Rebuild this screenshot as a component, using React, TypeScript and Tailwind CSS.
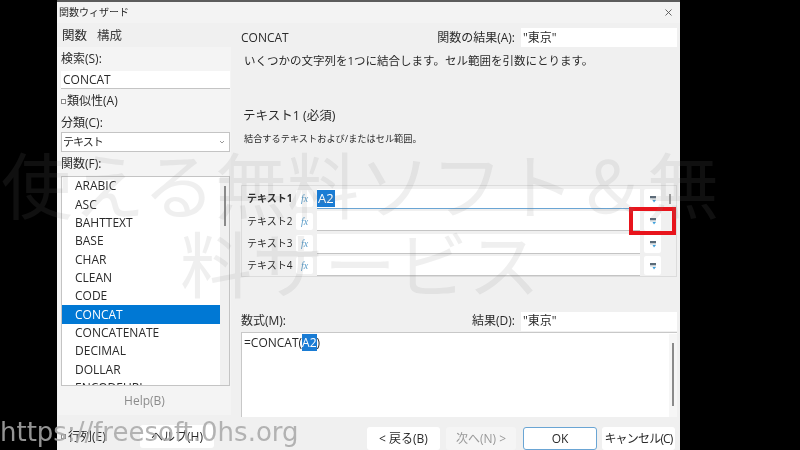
const functions = ['ARABIC', 'ASC', 'BAHTTEXT', 'BASE', 'CHAR', 'CLEAN', 'CODE', 'CONCAT', 'CONCATENATE', 'DECIMAL', 'DOLLAR', 'ENCODEURL']
const args = ['テキスト1', 'テキスト2', 'テキスト3', 'テキスト4']

function FxButton() {
  return (
    <div className="w-[17px] h-[17px] shrink-0 bg-white rounded-[2px] flex items-center justify-center">
      <span className="font-['Liberation_Serif',serif] italic text-[10px] text-[#5a9cc8]">fx</span>
    </div>
  )
}

function RefButton() {
  return (
    <div className="w-[17px] h-[19px] shrink-0 bg-white rounded-[2px] flex items-center justify-center">
      <svg width="8" height="8" viewBox="0 0 8 8">
        <rect x="1" y="1" width="6" height="2.5" fill="#5a6a78" />
        <rect x="1" y="3.5" width="6" height="1.5" fill="#dfe6ea" />
        <path d="M3.5 5h3.5L5 7.5z" fill="#3fa0dc" />
      </svg>
    </div>
  )
}

function Button({ children, className = '' }: { children: React.ReactNode; className?: string }) {
  return (
    <div className={`h-[23px] flex items-center justify-center rounded-[3px] text-[12px] whitespace-nowrap ${className}`}>
      {children}
    </div>
  )
}

export default function App() {
  return (
    <div className="relative w-[800px] h-[450px] overflow-hidden bg-black pl-[57px] font-['Open_Sans','Noto_Sans_CJK_JP',sans-serif] text-[12px] text-[#2a2a2a] blur-[0.4px]">
      {/* Dialog */}
      <div className="w-[623px] h-[450px] bg-[#f0f0f0] flex flex-col border-t-2 border-[#5c5c5c]">
        {/* Title bar */}
        <div className="h-[21px] shrink-0 bg-[#f3f3f3] flex items-center justify-between pl-[2px] pr-[8px]">
          <span className="text-[10px]">関数ウィザード</span>
          <svg width="7" height="7" viewBox="0 0 7 7" stroke="#555" strokeWidth="0.9">
            <path d="M0.5 0.5l6 6M6.5 0.5l-6 6" />
          </svg>
        </div>

        <div className="flex flex-1 min-h-0">
          {/* Left column */}
          <div className="w-[174px] shrink-0 flex flex-col">
            <div className="h-[24px] pl-[5px] pt-[3px] flex items-center gap-[10px] text-[12.5px]">
              <span>関数</span>
              <span className="text-[#444]">構成</span>
            </div>
            <div className="bg-[#f4f4f4] pl-[4px] pr-[1px] h-[339px] shrink-0 flex flex-col">
              <div className="h-[24px] shrink-0 flex items-center">検索(S):</div>
              <div className="h-[18px] shrink-0 bg-white border-b border-[#c4c4c4] flex items-center pl-[2px]">CONCAT</div>
              <div className="h-[24px] shrink-0 flex items-center gap-[1px]">
                <span className="w-[5px] h-[5px] border border-[#8a8a8a] bg-white" />
                <span>類似性(A)</span>
              </div>
              <div className="h-[19px] shrink-0 flex items-center">分類(C):</div>
              <div className="h-[20px] shrink-0 bg-white border border-[#c4c4c4] flex items-center justify-between pl-[1px] pr-[4px]">
                <span className="text-[11px] tracking-[-1px]">テキスト</span>
                <svg width="6" height="4" viewBox="0 0 6 4" fill="none" stroke="#999">
                  <path d="M1 1l2 2 2-2" />
                </svg>
              </div>
              <div className="h-[24px] shrink-0 flex items-center">関数(F):</div>
              <div className="h-[210px] shrink-0 bg-white border border-[#c4c4c4] flex overflow-hidden">
                <div className="flex-1 min-w-0 flex flex-col">
                  {functions.map((name) => (
                    <div
                      key={name}
                      className={`h-[18.35px] shrink-0 flex items-center pl-[13px] ${name === 'CONCAT' ? 'bg-[#0078d4] text-white' : ''}`}
                    >
                      {name}
                    </div>
                  ))}
                </div>
                <div className="w-[9px] shrink-0 bg-[#f0f0f0] pt-[9px] flex justify-center">
                  <div className="w-[2px] h-[40px] bg-[#8a8a8a]" />
                </div>
              </div>
            </div>
            <div className="h-[29px] shrink-0 ml-[1px] bg-[#f4f4f4] flex items-center justify-center text-[#8c8c8c]">Help(B)</div>
            <div className="flex-1 flex items-center pl-[4px] pt-[8px] gap-[14px]">
              <div className="flex items-center gap-[2px] w-[65px] whitespace-nowrap">
                <span className="w-[5px] h-[5px] border border-[#8a8a8a] bg-white" />
                <span>行列(E)</span>
              </div>
              <Button className="w-[74px] bg-white text-[11px]">ヘルプ(H)</Button>
            </div>
          </div>

          {/* Right column */}
          <div className="w-[436px] ml-[10px] shrink-0 flex flex-col">
            <div className="h-[24px] mt-[3px] flex items-center justify-between">
              <span>CONCAT</span>
              <div className="flex items-center gap-[6px]">
                <span>関数の結果(A):</span>
                <div className="w-[156px] h-[19px] bg-white flex items-center pl-[2px]">"東京"</div>
              </div>
            </div>
            <div className="mt-[1px] pl-[3px] h-[20px] flex items-center text-[11.5px] whitespace-nowrap">いくつかの文字列を1つに結合します。セル範囲を引数にとります。</div>
            <div className="mt-[36px] pl-[2px] h-[20px] flex items-center text-[12.5px]">テキスト1 (必須)</div>
            <div className="mt-[2px] pl-[3px] h-[20px] flex items-center text-[9.2px] whitespace-nowrap">結合するテキストおよび/またはセル範囲。</div>

            {/* Argument rows */}
            <div className="mt-[36px] h-[92px] border border-[#dcdcdc] pl-[5px] pr-[3px] pt-[2px] relative">
              {args.map((label, i) => (
                <div key={label} className="h-[22.4px] flex items-center">
                  <span className={`w-[49px] shrink-0 text-[10px] whitespace-nowrap ${i === 0 ? 'font-bold' : ''}`}>{label}</span>
                  <FxButton />
                  <div className={`w-[323px] h-[20px] ml-[4px] bg-white flex items-center border-b ${i === 0 ? 'border-[#6aa5d4]' : 'border-[#c4c4c4]'}`}>
                    {i === 0 && <span className="bg-[#1a7cd4] text-white px-[1px] text-[13px] leading-[17px]">A2</span>}
                  </div>
                  <div className="ml-[4px]"><RefButton /></div>
                  {i === 0 && <div className="ml-[8px] w-[2px] h-[10px] bg-[#9a9a9a]" />}
                </div>
              ))}
              {/* Highlight box */}
              <div className="absolute left-[387px] top-[21px] w-[47px] h-[28px] border-[4px] border-[#e8141c]" />
            </div>

            {/* Formula */}
            <div className="mt-[35px] h-[20px] flex items-center justify-between">
              <span>数式(M):</span>
              <div className="flex items-center gap-[6px]">
                <span>結果(D):</span>
                <div className="w-[156px] h-[19px] bg-white flex items-center pl-[2px]">"東京"</div>
              </div>
            </div>
            <div className="mt-[1px] h-[85px] bg-white border-t border-l border-[#c8c8c8] flex justify-between pl-[2px] pt-[1px]">
              <div className="leading-[18px]">
                =CONCAT(<span className="bg-[#1a7cd4] text-white">A2</span>)
              </div>
              <div className="w-[8px] bg-[#f6f6f6] pt-[9px] flex justify-center">
                <div className="w-[2px] h-[63px] bg-[#8a8a8a]" />
              </div>
            </div>

            {/* Footer buttons */}
            <div className="mt-[10px] flex items-center pl-[126px]">
              <Button className="w-[73px] bg-white">&lt; 戻る(B)</Button>
              <Button className="w-[70px] ml-[6px] bg-[#f5f5f5] text-[#9a9a9a]">次へ(N) &gt;</Button>
              <Button className="w-[74px] ml-[7px] bg-white border border-[#6aa5d4]">OK</Button>
              <Button className="w-[73px] ml-[5px] bg-white text-[10px] tracking-[-0.8px]">キャンセル(C)</Button>
            </div>
          </div>
        </div>
      </div>

      {/* Watermark over the screenshot */}
      <div className="absolute left-0 top-[142px] w-[720px] text-center text-[72px] leading-[79px] text-[#80808020] font-['Noto_Sans_CJK_JP',sans-serif] pointer-events-none">
        使える無料ソフト＆無料サービス
      </div>
      <div className="absolute left-0 top-[416px] font-['DejaVu_Sans',sans-serif] text-[26px] leading-[32px] text-[#a8a8a8e0] pointer-events-none whitespace-nowrap">
        https://freesoft.0hs.org
      </div>
    </div>
  )
}
